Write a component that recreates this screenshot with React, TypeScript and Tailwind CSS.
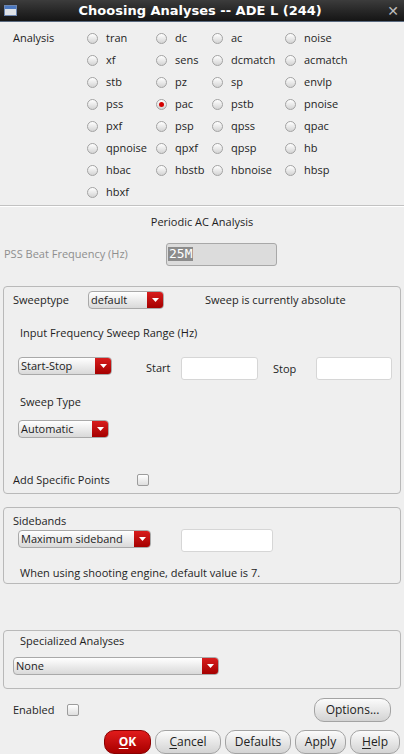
const FONT = "font-['Open_Sans',sans-serif]";

const analyses = [
  ["tran", "dc", "ac", "noise"],
  ["xf", "sens", "dcmatch", "acmatch"],
  ["stb", "pz", "sp", "envlp"],
  ["pss", "pac", "pstb", "pnoise"],
  ["pxf", "psp", "qpss", "qpac"],
  ["qpnoise", "qpxf", "qpsp", "hb"],
  ["hbac", "hbstb", "hbnoise", "hbsp"],
  ["hbxf"],
];

const colWidths = ["w-[69px]", "w-[56px]", "w-[73px]", "w-[80px]"];

const Radio = ({ checked }: { checked?: boolean }) => (
  <span className="flex items-center justify-center w-[11px] h-[11px] rounded-full border border-[#a3a3a3] bg-gradient-to-b from-white to-[#d4d4d4] shrink-0">
    {checked && <span className="w-[5px] h-[5px] rounded-full bg-[#d40000]" />}
  </span>
);

const Checkbox = () => (
  <span className="inline-block w-[12px] h-[12px] rounded-[2px] border border-[#9c9c9c] bg-gradient-to-b from-white to-[#dedede]" />
);

const Dropdown = ({ label, width }: { label: string; width: string }) => (
  <div
    className={`flex h-[18px] ${width} rounded-[4px] border border-[#a9a9a9] bg-gradient-to-b from-white to-[#d9d9d9] overflow-hidden shrink-0`}
  >
    <span className="flex-1 pl-[2px] leading-[16px] text-[11px] text-[#1c1c1c] whitespace-nowrap">
      {label}
    </span>
    <span className="w-[16px] flex items-center justify-center bg-gradient-to-b from-[#d81c1c] to-[#a50000]">
      <svg width="7" height="4" viewBox="0 0 7 4">
        <path d="M0 0 L7 0 L3.5 4 Z" fill="#ffffff" />
      </svg>
    </span>
  </div>
);

const TextBox = ({ width }: { width: string }) => (
  <div className={`h-[23px] ${width} rounded-[3px] border border-[#d6d6d6] bg-white shrink-0`} />
);

const Button = ({
  children,
  width,
  primary,
}: {
  children: React.ReactNode;
  width: string;
  primary?: boolean;
}) => (
  <div
    className={`flex items-center justify-center h-[24px] ${width} rounded-[10px] border text-[12px] ${
      primary
        ? "border-[#8a0000] bg-gradient-to-b from-[#e11b1b] to-[#a80000] text-white font-bold"
        : "border-[#a3a3a3] bg-gradient-to-b from-[#fbfbfb] to-[#d3d3d3] text-[#222]"
    }`}
  >
    {children}
  </div>
);

const GroupBox = ({ children, className = "" }: { children: React.ReactNode; className?: string }) => (
  <div className={`mx-[3px] rounded-[4px] border border-[#b9b9b9] ${className}`}>{children}</div>
);

export default function App() {
  return (
    <div className={`w-[404px] h-[754px] overflow-hidden bg-[#efefef] ${FONT} text-[11px] text-[#1e1e1e]`}>
      {/* Title bar */}
      <div className="relative flex items-center h-[22px] bg-gradient-to-b from-[#3c3c3c] to-[#151515] border-b border-[#5a6a80]">
        <div className="ml-[4px] w-[13px] h-[11px] border border-[#6e87b0] bg-[#dfe3e8] flex flex-col">
          <span className="h-[3px] bg-[#4b78c0]" />
        </div>
        <div className="flex-1 text-center text-white font-['DejaVu_Sans',sans-serif] font-bold text-[13px] pr-[4px]">
          Choosing Analyses -- ADE L (244)
        </div>
        <span className="mr-[5px] text-[#bdbdbd] text-[14px] font-['DejaVu_Sans',sans-serif] leading-none">✕</span>
      </div>

      {/* Analysis radios */}
      <div className="flex pt-[5px] h-[183px]">
        <div className="w-[87px] pl-[13px] h-[22px] flex items-center">Analysis</div>
        <div className="flex flex-col">
          {analyses.map((row, i) => (
            <div key={i} className="flex h-[22px] items-center">
              {row.map((name, j) => (
                <div key={name} className={`flex items-center gap-[8px] ${colWidths[j]}`}>
                  <Radio checked={name === "pac"} />
                  <span>{name}</span>
                </div>
              ))}
            </div>
          ))}
        </div>
      </div>
      <div className="h-px bg-[#c2c2c2]" />
      <div className="h-px bg-white" />

      <div className="h-[31px] flex items-center justify-center">Periodic AC Analysis</div>
      <div className="h-[32px] flex items-center">
        <span className="w-[166px] pl-[4px] text-[#8e8e8e]">PSS Beat Frequency (Hz)</span>
        <div className="h-[23px] w-[111px] rounded-[3px] border border-[#a8a8a8] bg-[#dcdcdc] flex items-center pl-[1px]">
          <span className="bg-[#8c8c8c] text-white font-['DejaVu_Sans_Mono',monospace] text-[13px] leading-[14px] px-[1px]">
            25M
          </span>
        </div>
      </div>

      {/* Sweep group */}
      <GroupBox className="mt-[16px] h-[208px] pl-[9px]">
        <div className="mt-[2px] h-[22px] flex items-center">
          <span className="w-[75px]">Sweeptype</span>
          <Dropdown label="default" width="w-[76px]" />
          <span className="ml-[41px]">Sweep is currently absolute</span>
        </div>
        <div className="mt-[11px] h-[22px] flex items-center pl-[7px]">Input Frequency Sweep Range (Hz)</div>
        <div className="mt-[13px] h-[23px] flex items-start pl-[5px]">
          <Dropdown label="Start-Stop" width="w-[94px]" />
          <span className="ml-[34px] w-[35px] leading-[21px]">Start</span>
          <TextBox width="w-[77px]" />
          <span className="ml-[15px] w-[43px] leading-[23px]">Stop</span>
          <TextBox width="w-[76px]" />
        </div>
        <div className="mt-[11px] h-[22px] flex items-center pl-[7px]">Sweep Type</div>
        <div className="mt-[7px] pl-[5px]">
          <Dropdown label="Automatic" width="w-[91px]" />
        </div>
        <div className="mt-[31px] h-[22px] flex items-center">
          <span className="w-[124px]">Add Specific Points</span>
          <Checkbox />
        </div>
      </GroupBox>

      {/* Sidebands group */}
      <GroupBox className="mt-[13px] h-[77px] pl-[9px]">
        <div className="mt-[5px] h-[16px] flex items-center">Sidebands</div>
        <div className="h-[23px] flex items-start pl-[5px]">
          <div className="mt-[1px]">
            <Dropdown label="Maximum sideband" width="w-[133px]" />
          </div>
          <div className="ml-[30px]">
            <TextBox width="w-[92px]" />
          </div>
        </div>
        <div className="mt-[13px] h-[16px] flex items-center pl-[7px]">
          When using shooting engine, default value is 7.
        </div>
      </GroupBox>

      {/* Specialized group */}
      <GroupBox className="mt-[46px] h-[59px]">
        <div className="mt-[2px] h-[16px] flex items-center pl-[16px]">Specialized Analyses</div>
        <div className="mt-[8px] pl-[9px]">
          <Dropdown label="None" width="w-[206px]" />
        </div>
      </GroupBox>

      <div className="mt-[10px] h-[22px] flex items-center pl-[13px] pr-[13px]">
        <span className="w-[54px]">Enabled</span>
        <Checkbox />
        <div className="ml-auto">
          <Button width="w-[77px]">Options...</Button>
        </div>
      </div>

      <div className="mt-[9px] flex justify-end gap-[4px] pr-[4px]">
        <Button width="w-[47px]" primary>
          <span className="underline underline-offset-2">O</span>K
        </Button>
        <Button width="w-[66px]">
          <span className="underline underline-offset-2">C</span>ancel
        </Button>
        <Button width="w-[66px]">Defaults</Button>
        <Button width="w-[51px]">Apply</Button>
        <Button width="w-[50px]">
          <span className="underline underline-offset-2">H</span>elp
        </Button>
      </div>
    </div>
  );
}
